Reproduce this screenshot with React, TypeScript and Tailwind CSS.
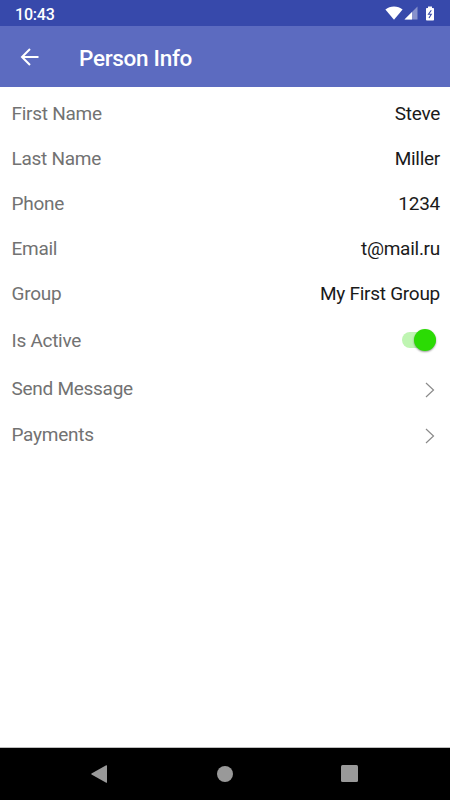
import React, { useState } from 'react';
import clsx from 'clsx';

const fields = [
  { label: 'First Name', value: 'Steve' },
  { label: 'Last Name', value: 'Miller' },
  { label: 'Phone', value: '1234' },
  { label: 'Email', value: 't@mail.ru' },
  { label: 'Group', value: 'My First Group' },
];

const links = ['Send Message', 'Payments'];

const StatusBar: React.FC = () => (
  <div className="h-[26px] shrink-0 bg-[#3749ab] px-[15px] flex items-center justify-between text-white">
    <span className="pt-[3px] text-[16px] leading-none font-medium tracking-[-0.2px]">10:43</span>
    <div className="flex items-center">
      <svg className="w-[18px] h-[14px]" viewBox="0 0 18 14" fill="currentColor">
        <path d="M0.4 3.4C2.8 1.5 5.8 0.5 9 0.5s6.2 1 8.6 2.9L9 13.8z" />
      </svg>
      <svg className="w-[14px] h-[14px] ml-px" viewBox="0 0 14 14" fill="currentColor">
        <path d="M0.5 13.5L13.5 0.5v13z" opacity="0.4" />
        <path d="M0.5 13.5L8 6v7.5z" />
      </svg>
      <svg className="w-[10px] h-[15px] ml-[7px]" viewBox="0 0 10 15">
        <path d="M3 0.5h4V2h1.2c.5 0 .8.3.8.8v10.9c0 .5-.3.8-.8.8H1.8c-.5 0-.8-.3-.8-.8V2.8c0-.5.3-.8.8-.8H3z" fill="currentColor" />
        <path d="M6.3 4.3L3.5 8.2H6.3L4 12" fill="none" stroke="#3749ab" strokeWidth="1.1" />
      </svg>
    </div>
  </div>
);

const NavigationBar: React.FC = () => (
  <div className="h-[53px] shrink-0 bg-black border-t border-[#bdbdbd] px-[90px] flex items-center justify-between text-[#999999]">
    <svg className="w-[18px] h-[18px]" viewBox="0 0 18 18" fill="currentColor">
      <path d="M16.2 0.3c.4-.2.8 0 .8.5v16.4c0 .5-.4.7-.8.5L1.5 9.5c-.4-.3-.4-.7 0-1z" />
    </svg>
    <div className="w-4 h-4 rounded-full bg-current" />
    <div className="w-[17px] h-[17px] rounded-[1.5px] bg-current mr-[2px] mb-px" />
  </div>
);

const App: React.FC = () => {
  const [isActive, setIsActive] = useState(true);

  return (
    <div className="h-screen bg-white flex flex-col overflow-hidden font-[Roboto,sans-serif]">
      <StatusBar />

      {/* App bar */}
      <header className="h-[61px] shrink-0 bg-[#5c6bc0] flex items-center pl-[20px] text-white">
        <button type="button" aria-label="Back">
          <svg className="w-[19px] h-[18px]" viewBox="0 0 19 18" fill="none" stroke="currentColor" strokeWidth="2">
            <path d="M18.5 9H2M10 1L2 9l8 8" />
          </svg>
        </button>
        <h1 className="ml-[40px] pt-[3px] text-[22.5px] leading-none font-medium tracking-[-0.3px]">Person Info</h1>
      </header>

      <main className="flex-1 pt-[5px] text-[19px] text-[#727272] tracking-[-0.27px]">
        {fields.map(({ label, value }) => (
          <div key={label} className="h-[45px] pl-[11.5px] pr-[10px] flex items-center justify-between">
            <span>{label}</span>
            <span className="text-[#1a1a1a]">{value}</span>
          </div>
        ))}

        <div className="h-[48px] pl-[11.5px] pr-[14px] flex items-center justify-between">
          <span>Is Active</span>
          <button
            type="button"
            role="switch"
            aria-checked={isActive}
            aria-label="Is Active"
            onClick={() => setIsActive(!isActive)}
            className={clsx('w-[34px] h-[16px] mb-[2px] rounded-full flex items-center', isActive ? 'justify-end bg-[#bff5b2]' : 'bg-gray-300')}
          >
            <span className={clsx('w-[22px] h-[22px] shrink-0 rounded-full shadow-[0_1px_2px_rgba(0,0,0,0.4)]', isActive ? 'bg-[#2bdb04]' : 'bg-white')} />
          </button>
        </div>

        {links.map((label) => (
          <div key={label} className="h-[46px] pt-[2px] pl-[11.5px] pr-[15px] flex items-center justify-between">
            <span>{label}</span>
            <svg className="w-[10px] h-[16px] mt-[2px]" viewBox="0 0 10 16" fill="none" stroke="#8a8a8a" strokeWidth="1.2">
              <path d="M1 1l7.5 7L1 15" />
            </svg>
          </div>
        ))}
      </main>

      <NavigationBar />
    </div>
  );
};

export default App;
